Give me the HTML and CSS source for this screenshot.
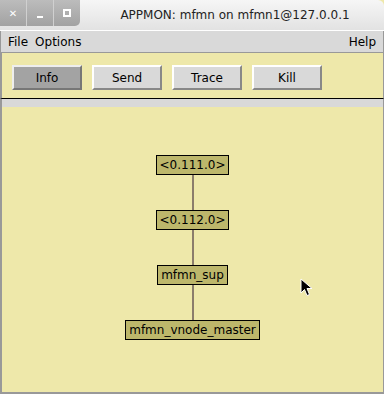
FILE: index.html
```html
<!DOCTYPE html>
<html>
<head>
<meta charset="utf-8">
<link rel="stylesheet" href="styles.css">
</head>
<body>
<div class="window">
	<div class="titlebar">
		<div class="wm-buttons">
			<span class="wm-btn">&#10005;</span>
			<span class="wm-btn"><i class="min"></i></span>
			<span class="wm-btn"><i class="max"></i></span>
		</div>
		<div class="title">APPMON: mfmn on mfmn1@127.0.0.1</div>
	</div>

	<div class="menubar">
		<span>File</span>
		<span>Options</span>
		<span class="spacer"></span>
		<span>Help</span>
	</div>

	<div class="toolbar">
		<button class="tk-btn active">Info</button>
		<button class="tk-btn">Send</button>
		<button class="tk-btn">Trace</button>
		<button class="tk-btn">Kill</button>
	</div>

	<div class="divider"></div>

	<div class="canvas">
		<div class="tree">
			<div class="node">&lt;0.111.0&gt;</div>
			<div class="edge"></div>
			<div class="node">&lt;0.112.0&gt;</div>
			<div class="edge"></div>
			<div class="node">mfmn_sup</div>
			<div class="edge"></div>
			<div class="node">mfmn_vnode_master</div>
		</div>
		<svg class="cursor" width="14" height="20" viewBox="0 0 14 20">
			<path d="M1 1 L1 15 L4.5 11.5 L7 17.5 L9.5 16.5 L7 10.5 L12 10.5 Z" fill="#000" stroke="#fff" stroke-width="1"/>
		</svg>
	</div>
</div>
</body>
</html>
```

FILE: styles.css
```css
body {
	margin: 0;
	font-family: "DejaVu Sans", sans-serif;
	font-size: 12px;
	color: #000;
}

.window {
	width: 384px;
	height: 394px;
	display: flex;
	flex-direction: column;
	background: #eee8aa;
	box-sizing: border-box;
	overflow: hidden;
}

/* window manager title */

.titlebar {
	height: 30px;
	display: flex;
	background: linear-gradient(#f6f6f6, #e2e2e2);
	border-top-right-radius: 6px;
	border-bottom: 1px solid #fff;
	flex-shrink: 0;
}

.wm-buttons {
	display: flex;
	height: 26px;
	background: linear-gradient(#bcbcbc, #a2a2a2);
	border-bottom-right-radius: 5px;
}

.wm-btn {
	width: 26px;
	border-right: 1px solid #d0d0d0;
	display: flex;
	align-items: center;
	justify-content: center;
	color: #fff;
	font-size: 10px;
	font-weight: bold;
}

.wm-btn:last-child {
	border-right: none;
}

.wm-btn .min {
	width: 6px;
	height: 2px;
	background: #fff;
	margin-top: 7px;
}

.wm-btn .max {
	width: 4px;
	height: 4px;
	border: 2px solid #fff;
}

.title {
	flex: 1;
	text-align: center;
	font-size: 12px;
	line-height: 30px;
	color: #222;
	padding-left: 6px;
}

/* menu */

.menubar {
	height: 21px;
	display: flex;
	align-items: center;
	gap: 7px;
	padding: 0 7px;
	background: #d9d9d9;
	border-left: 1px solid #999;
	border-right: 1px solid #999;
	border-bottom: 1px solid #999;
	flex-shrink: 0;
}

.menubar .spacer {
	flex: 1;
}

/* buttons */

.toolbar {
	height: 46px;
	display: flex;
	gap: 10px;
	padding: 12px 0 0 10px;
	box-sizing: border-box;
	border-left: 2px solid #999;
	border-right: 1px solid #999;
	border-bottom: 1px solid #000;
	flex-shrink: 0;
}

.tk-btn {
	width: 70px;
	height: 25px;
	font-family: "DejaVu Sans", sans-serif;
	font-size: 12px;
	color: #000;
	background: #d9d9d9;
	border: 2px solid;
	border-color: #fff #888 #888 #fff;
	padding: 0;
}

.tk-btn.active {
	background: #a3a3a3;
	border-color: #eee #777 #777 #eee;
}

.divider {
	height: 8px;
	background: #d9d9d9;
	border-left: 2px solid #999;
	border-right: 1px solid #999;
	flex-shrink: 0;
}

/* process tree */

.canvas {
	flex: 1;
	position: relative;
	border-left: 2px solid #999;
	border-right: 1px solid #999;
	border-bottom: 2px solid #999;
}

.tree {
	display: flex;
	flex-direction: column;
	align-items: center;
	padding-top: 48px;
}

.node {
	background: #bdb76b;
	border: 1px solid #000;
	height: 18px;
	line-height: 18px;
	padding: 0 3px;
	white-space: nowrap;
}

.edge {
	width: 2px;
	height: 35px;
	background: #8b7d6b;
}

.cursor {
	position: absolute;
	left: 298px;
	top: 171px;
}
```
